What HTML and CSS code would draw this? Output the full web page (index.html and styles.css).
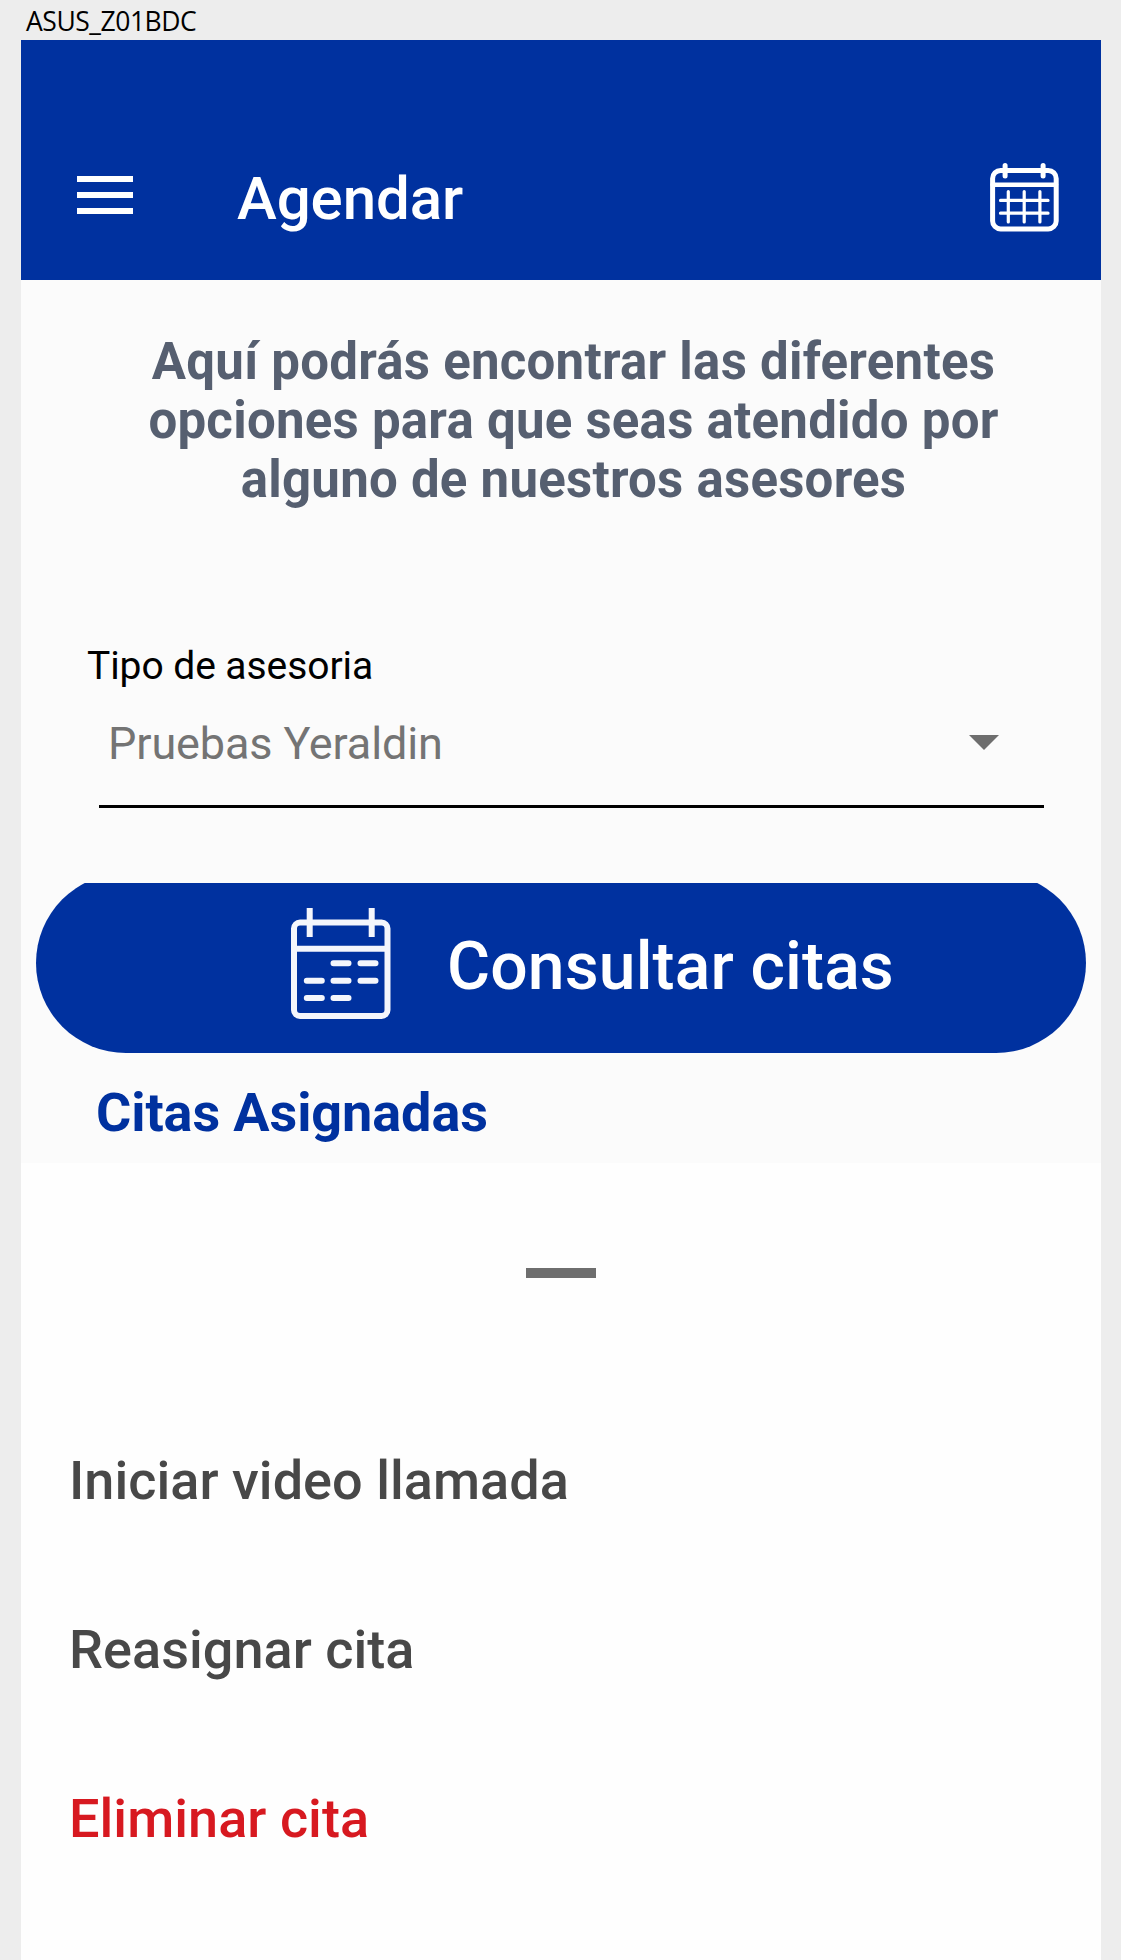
FILE: index.html
```html
<!DOCTYPE html>
<html lang="es">
<head>
<meta charset="utf-8">
<title>Agendar</title>
<link rel="stylesheet" href="styles.css">
</head>
<body>
<div class="device-name">ASUS_Z01BDC</div>
<main class="phone">
  <header class="app-bar">
    <svg class="menu-icon" width="56" height="38" viewBox="0 0 56 38" fill="#fff"><path d="M0 0h56v6H0zM0 16h56v6H0zM0 32h56v6H0z"/></svg>
    <h1 class="app-title">Agendar</h1>
    <svg class="calendar-icon" width="69" height="69" viewBox="0 0 69 69" fill="none" stroke="#fff" stroke-linecap="round">
      <rect x="2.6" y="7.5" width="63.6" height="58.4" rx="8" stroke-width="5"/>
      <path d="M2.6 21.8H66" stroke-width="4.6"/>
      <path d="M15.1 2.5v10.5M53.1 2.5v10.5" stroke-width="5"/>
      <path d="M18.3 28.5v30.5M34.2 28.5v30.5M49.9 28.5v30.5M10.5 37.4h47.5M10.5 50.2h47.5" stroke-width="3.2"/>
    </svg>
  </header>
  <section class="content">
    <p class="intro">Aquí podrás encontrar las diferentes<br>opciones para que seas atendido por<br>alguno de nuestros asesores</p>
    <label class="field-label">Tipo de asesoria</label>
    <div class="select">
      <span class="select-value">Pruebas Yeraldin</span>
      <svg class="select-arrow" width="30" height="15" viewBox="0 0 30 15"><path d="M0 0h30L15 15z" fill="#6e6e6e"/></svg>
    </div>
    <div class="button-clip">
      <div class="button">
        <svg class="button-icon" width="100" height="112" viewBox="0 0 100 112" fill="none" stroke="#f4f6fc" stroke-width="6">
          <rect x="3" y="14.5" width="93.5" height="93.5" rx="6"/>
          <path d="M3 40.8h93.5"/>
          <path d="M18.7 0v29M80.7 0v29"/>
          <path d="M42.5 55.3h15M69.5 55.3h15M15.8 72.7h15M42.5 72.7h15M69.5 72.7h15M15.8 90h15M42.5 90h15" stroke-linecap="round"/>
        </svg>
        <span class="button-text">Consultar citas</span>
      </div>
    </div>
    <h2 class="section-title">Citas Asignadas</h2>
  </section>
  <section class="sheet">
    <div class="handle"></div>
    <ul class="actions">
      <li class="action">Iniciar video llamada</li>
      <li class="action">Reasignar cita</li>
      <li class="action danger">Eliminar cita</li>
    </ul>
  </section>
</main>
</body>
</html>
```
FILE: styles.css
```css
* { box-sizing: border-box; }
body { margin: 0; height: 1960px; overflow: hidden; background: #ededed; font-family: Roboto, "Liberation Sans", sans-serif; }
h1, h2, p, ul { margin: 0; padding: 0; }
svg { display: block; flex: none; }
.device-name { height: 40px; padding: 2px 0 0 26px; font: 400 26.5px/38px "Open Sans", "Noto Sans", sans-serif; letter-spacing: -0.45px; color: #000; white-space: nowrap; }
.phone { width: 1080px; height: 1920px; margin-left: 21px; background: #fefefe; display: flex; flex-direction: column; }
.app-bar { height: 240px; padding: 72px 42px 0 56px; background: #00319f; display: flex; align-items: center; color: #fff; }
.menu-icon { margin-bottom: 2px; }
.app-title { flex: 1; margin: 5px 0 0 104px; font-weight: 500; font-size: 60px; line-height: 70px; letter-spacing: -0.1px; }
.calendar-icon { margin-top: 2px; }
.content { height: 883px; padding-top: 52px; background: #fbfbfb; }
.intro { margin-left: 25px; text-align: center; font-weight: 700; font-size: 51px; line-height: 59px; letter-spacing: 0.24px; color: #565f70; white-space: nowrap; }
.field-label { display: block; margin: 134px 0 0 66px; font-size: 39px; line-height: 46px; letter-spacing: -0.07px; color: #000; }
.select { width: 945px; height: 119px; margin-left: 78px; padding: 28px 45px 0 9px; border-bottom: 3px solid #000; display: flex; justify-content: space-between; align-items: flex-start; }
.select-value { font-size: 45px; line-height: 54px; letter-spacing: -0.13px; color: #747474; }
.select-arrow { margin-top: 18px; }
.button-clip { height: 170px; margin: 75px 15px 0; overflow: hidden; display: flex; align-items: flex-end; }
.button { width: 1050px; height: 180px; flex: none; border-radius: 90px; background: #00319f; color: #fff; display: flex; align-items: flex-start; padding: 35px 0 0 255px; }
.button-text { margin: 20px 0 0 56px; font-weight: 500; font-size: 66px; line-height: 78px; letter-spacing: 0.14px; white-space: nowrap; }
.section-title { margin: 28px 0 0 75px; font-weight: 700; font-size: 54px; line-height: 64px; letter-spacing: -0.1px; color: #00319f; }
.sheet { flex: 1; padding-top: 105px; }
.handle { width: 70px; height: 10px; margin: 0 auto; background: #6e6e6e; }
.actions { list-style: none; margin-top: 118px; padding-left: 48px; }
.action { font-weight: 500; font-size: 54px; line-height: 169px; height: 169px; letter-spacing: 0.04px; color: #484848; }
.danger { color: #d71920; }
```
